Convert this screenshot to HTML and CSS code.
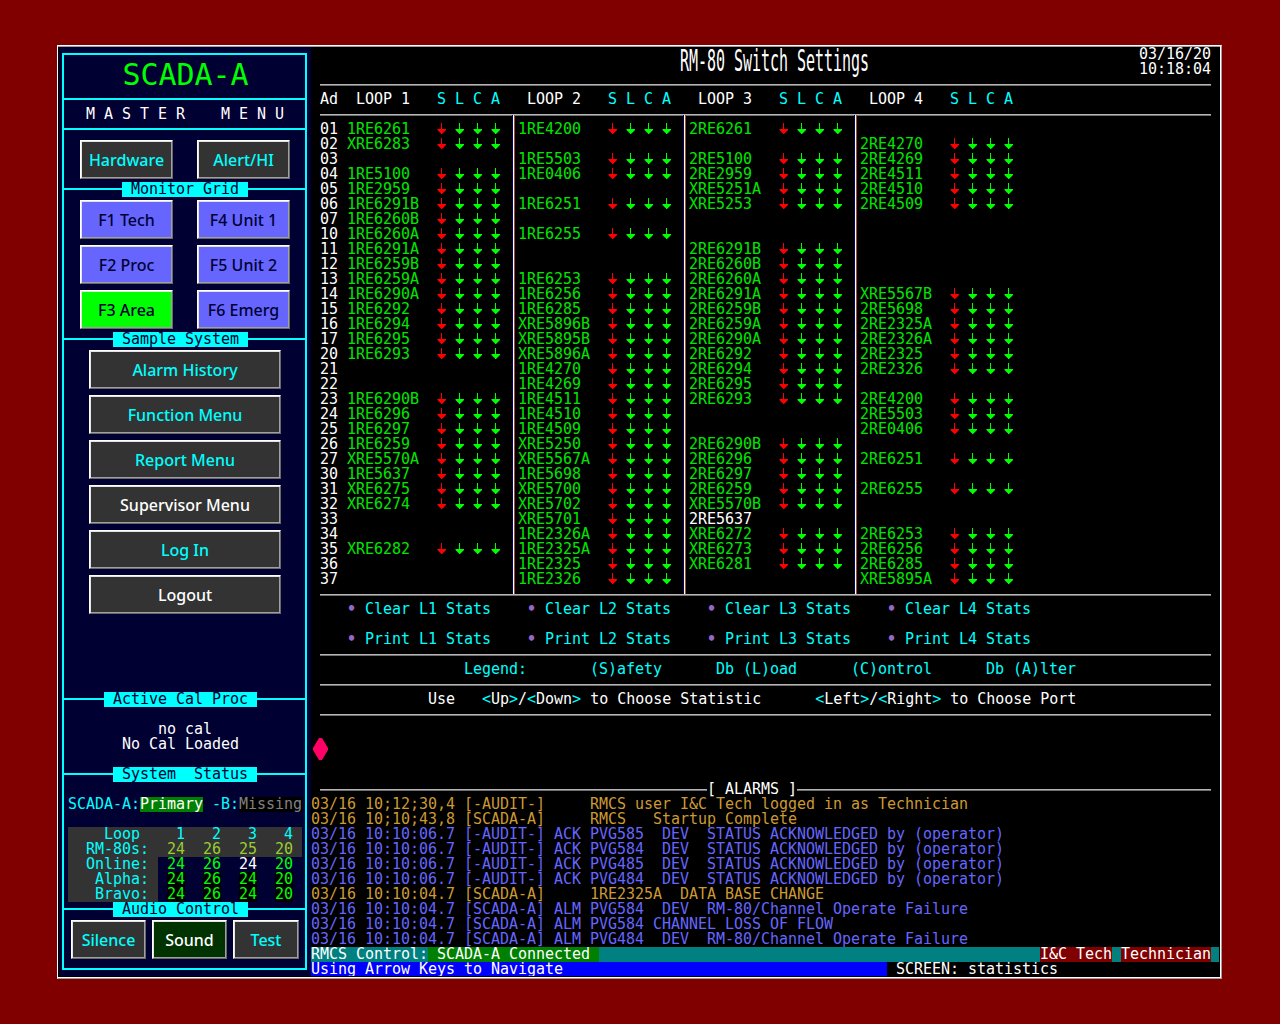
FILE: index.html
```
<!DOCTYPE html>
<html lang="en">
<head>
  <meta charset="UTF-8">
  <title>RM-80 Switch Settings</title>
  <link rel="stylesheet" href="styles.css">
</head>
<body>
  <div class="window">
    <div class="sidebar">
      <div class="frame">
        <div class="brand">SCADA-A</div>
        <div class="menu-title">M A S T E R    M E N U</div>

        <div class="grid top-grid">
          <button>Hardware</button>
          <button>Alert/HI</button>
        </div>

        <div class="section"><span> Monitor Grid </span></div>
        <div class="grid monitor-grid">
          <button class="blue">F1 Tech</button>
          <button class="blue">F4 Unit 1</button>
          <button class="blue">F2 Proc</button>
          <button class="blue">F5 Unit 2</button>
          <button class="green">F3 Area</button>
          <button class="blue">F6 Emerg</button>
        </div>

        <div class="section sample"><span> Sample System </span></div>
        <div class="stack">
          <button>Alarm History</button>
          <button>Function Menu</button>
          <button>Report Menu</button>
          <button class="light">Supervisor Menu</button>
          <button>Log In</button>
          <button class="light">Logout</button>
        </div>

        <div class="section wide"><span> Active Cal Proc </span></div>
        <pre class="cal">           no cal
       No Cal Loaded</pre>

        <div class="section system"><span> System  Status </span></div>
        <pre class="peers"><span>SCADA-A:</span><span class="primary">Primary</span><span> -B:</span><span class="missing">Missing</span></pre>
        <pre class="stats" id="stats"></pre>

        <div class="section sample"><span> Audio Control </span></div>
        <div class="audio">
          <button>Silence</button>
          <button class="sound">Sound</button>
          <button>Test</button>
        </div>
      </div>
    </div>

    <div class="main">
      <div class="header">
        <h1>RM-80 Switch Settings</h1>
        <pre class="clock">03/16/20
10:18:04</pre>
      </div>
      <div class="rule"></div>
      <pre class="heads" id="heads"></pre>
      <div class="rule"></div>
      <div class="table" id="table"></div>
      <div class="rule"></div>
      <div class="actions" id="actions"></div>
      <div class="rule"></div>
      <pre class="cyan">                 Legend:       (S)afety      Db (L)oad      (C)ontrol      Db (A)lter</pre>
      <div class="rule"></div>
      <pre>             Use   <i>&lt;</i>Up<i>&gt;</i>/<i>&lt;</i>Down<i>&gt;</i> to Choose Statistic      <i>&lt;</i>Left<i>&gt;</i>/<i>&lt;</i>Right<i>&gt;</i> to Choose Port</pre>
      <div class="rule"></div>
      <div class="prompt">
        <svg width="15" height="22" viewBox="0 0 15 22"><path d="M6 0h3l6 10v2l-6 10h-3l-6-10v-2z" fill="#ff0066"/></svg>
      </div>
      <div class="rule alarms-rule"><span>[ ALARMS ]</span></div>
      <pre class="alarms" id="alarms"></pre>
      <div class="status">
        <pre>RMCS Control:</pre><pre class="connected"> SCADA-A Connected </pre>
        <pre class="user">I&amp;C Tech</pre><pre class="role">Technician</pre>
      </div>
      <div class="hint">
        <pre class="hint-text">Using Arrow Keys to Navigate</pre><pre> SCREEN: statistics</pre>
      </div>
    </div>
  </div>

  <script>
    // addresses are octal, 01 to 37
    const loops = [
      ["1RE6261", "XRE6283", "", "1RE5100", "1RE2959", "1RE6291B", "1RE6260B", "1RE6260A",
       "1RE6291A", "1RE6259B", "1RE6259A", "1RE6290A", "1RE6292", "1RE6294", "1RE6295", "1RE6293",
       "", "", "1RE6290B", "1RE6296", "1RE6297", "1RE6259", "XRE5570A", "1RE5637",
       "XRE6275", "XRE6274", "", "", "XRE6282", "", ""],
      ["1RE4200", "", "1RE5503", "1RE0406", "", "1RE6251", "", "1RE6255",
       "", "", "1RE6253", "1RE6256", "1RE6285", "XRE5896B", "XRE5895B", "XRE5896A",
       "1RE4270", "1RE4269", "1RE4511", "1RE4510", "1RE4509", "XRE5250", "XRE5567A", "1RE5698",
       "XRE5700", "XRE5702", "XRE5701", "1RE2326A", "1RE2325A", "1RE2325", "1RE2326"],
      ["2RE6261", "", "2RE5100", "2RE2959", "XRE5251A", "XRE5253", "", "",
       "2RE6291B", "2RE6260B", "2RE6260A", "2RE6291A", "2RE6259B", "2RE6259A", "2RE6290A", "2RE6292",
       "2RE6294", "2RE6295", "2RE6293", "", "", "2RE6290B", "2RE6296", "2RE6297",
       "2RE6259", "XRE5570B", "2RE5637", "XRE6272", "XRE6273", "XRE6281", ""],
      ["", "2RE4270", "2RE4269", "2RE4511", "2RE4510", "2RE4509", "", "",
       "", "", "", "XRE5567B", "2RE5698", "2RE2325A", "2RE2326A", "2RE2325",
       "2RE2326", "", "2RE4200", "2RE5503", "2RE0406", "", "2RE6251", "",
       "2RE6255", "", "", "2RE6253", "2RE6256", "2RE6285", "XRE5895A"]
    ];
    const offline = "2RE5637";

    function arrow(cls) {
      return '<svg class="arrow ' + cls + '" viewBox="0 0 9 15"><path d="M4 1h1v6h4v1l-3 3h-.5v1h-1.5v-1h-.5l-3-3v-1h3.5z"/></svg>';
    }

    // address column
    let html = '<div class="addr">';
    for (let i = 1; i <= 31; i++) {
      let n = i.toString(8).padStart(2, "0");
      html += "<div>" + n + "</div>";
    }
    html += "</div>";

    for (const loop of loops) {
      html += '<div class="loop">';
      for (const code of loop) {
        if (!code) {
          html += '<div class="row"></div>';
        } else if (code === offline) {
          html += '<div class="row"><span class="code off">' + code + "</span></div>";
        } else {
          html += '<div class="row"><span class="code">' + code + "</span>" +
            arrow("red") + arrow("") + arrow("") + arrow("") + "</div>";
        }
      }
      html += "</div>";
    }
    document.getElementById("table").innerHTML = html;

    // loop headings
    let heads = " Ad  ";
    for (let i = 1; i <= 4; i++) {
      heads += "LOOP " + i + "   <i>S L C A</i>   ";
    }
    document.getElementById("heads").innerHTML = heads;

    // clear / print links
    let actions = "";
    for (const word of ["Clear", "Print"]) {
      for (let i = 1; i <= 4; i++) {
        actions += "<div><b>&bull;</b><span>" + word + " L" + i + " Stats</span></div>";
      }
    }
    document.getElementById("actions").innerHTML = actions;

    const alarms = [
      ["gold", "03/16 10;12;30,4 [-AUDIT-]     RMCS user I&amp;C Tech logged in as Technician"],
      ["gold", "03/16 10;10;43,8 [SCADA-A]     RMCS   Startup Complete"],
      ["", "03/16 10:10:06.7 [-AUDIT-] ACK PVG585  DEV  STATUS ACKNOWLEDGED by (operator)"],
      ["", "03/16 10:10:06.7 [-AUDIT-] ACK PVG584  DEV  STATUS ACKNOWLEDGED by (operator)"],
      ["", "03/16 10:10:06.7 [-AUDIT-] ACK PVG485  DEV  STATUS ACKNOWLEDGED by (operator)"],
      ["", "03/16 10:10:06.7 [-AUDIT-] ACK PVG484  DEV  STATUS ACKNOWLEDGED by (operator)"],
      ["gold", "03/16 10:10:04.7 [SCADA-A]     1RE2325A  DATA BASE CHANGE"],
      ["", "03/16 10:10:04.7 [SCADA-A] ALM PVG584  DEV  RM-80/Channel Operate Failure"],
      ["", "03/16 10:10:04.7 [SCADA-A] ALM PVG584 CHANNEL LOSS OF FLOW"],
      ["", "03/16 10:10:04.7 [SCADA-A] ALM PVG484  DEV  RM-80/Channel Operate Failure"]
    ];
    document.getElementById("alarms").innerHTML =
      alarms.map(a => '<div class="' + a[0] + '">' + a[1] + "</div>").join("");

    // loop statistics in the sidebar
    const stats = [
      ["head", "    Loop  ", [" 1", " 2", " 3", " 4"]],
      ["total", "  RM-80s: ", [24, 26, 25, 20]],
      ["online", "  Online: ", [24, 26, 24, 20]],
      ["chan", "   Alpha: ", [24, 26, 24, 20]],
      ["chan", "   Bravo: ", [24, 26, 24, 20]]
    ];
    document.getElementById("stats").innerHTML = stats.map(s =>
      '<div class="' + s[0] + '"><span class="label">' + s[1] + "</span>" +
      s[2].map(v => "<em>" + v + "</em>").join("") + "</div>").join("");
  </script>
</body>
</html>
```

FILE: styles.css
```
* {
  box-sizing: border-box;
}

body {
  margin: 0;
  background: #800000;
  padding: 45px 0 0 57px;
  font-family: "DejaVu Sans Mono", monospace;
  font-size: 15px;
  line-height: 15px;
  letter-spacing: -0.03px;
  color: white;
}

pre {
  margin: 0;
  font: inherit;
}

i, em, b {
  font-style: normal;
  font-weight: normal;
}

/* everything sits on a 9x15 character grid */
.window {
  width: 1165px;
  height: 934px;
  border: 1px solid white;
  border-right-color: #a0a0a0;
  border-bottom-color: #a0a0a0;
  box-shadow: inset -1px -1px white, inset 0 1px #a0a0a0;
  padding: 1px 0 0 1px;
  background: black;
  display: flex;
}

.sidebar {
  width: 252px;
  height: 929px;
  padding: 6px 4px 6px 3px;
  background: #000033;
  flex: none;
}

.frame {
  height: 917px;
  border: 2px solid cyan;
}

.brand {
  height: 45px;
  padding: 5px 0 0 2px;
  border-bottom: 2px solid cyan;
  color: lime;
  font-size: 30px;
  line-height: 30px;
  letter-spacing: -0.06px;
  text-align: center;
}

.menu-title {
  height: 30px;
  padding: 7px 0 0 22px;
  border-bottom: 2px solid cyan;
  white-space: pre;
}

button {
  height: 39px;
  padding: 0;
  border: 1px solid;
  border-color: #fff #696969 #696969 #fff;
  border-radius: 0;
  box-shadow: inset 1px 1px #e3e3e3, inset -1px -1px #a0a0a0;
  background: #333;
  color: cyan;
  font-family: "Noto Sans", sans-serif;
  font-size: 16px;
  font-weight: 500;
  white-space: nowrap;
}

.blue {
  background: #6666ff;
  color: #000033;
}

.green {
  background: lime;
  color: #000033;
}

.light, .sound {
  color: white;
}

.sound {
  background: #003300;
}

.grid {
  display: grid;
  grid-template-columns: 93px 93px;
  column-gap: 24px;
  row-gap: 6px;
  padding-left: 16px;
}

.top-grid {
  padding-top: 10px;
  height: 52px;
}

.section {
  height: 15px;
  padding-left: 58px;
  background: linear-gradient(transparent 6px, cyan 6px, cyan 8px, transparent 8px);
  white-space: pre;
  color: #000033;
}

.section span {
  display: block;
  width: max-content;
  background: cyan;
}

.sample, .system {
  padding-left: 49px;
}

.wide {
  padding-left: 40px;
}

.monitor-grid {
  height: 135px;
  padding-top: 3px;
  align-content: start;
}

.stack {
  display: flex;
  flex-direction: column;
  gap: 6px;
  width: 217px;
  height: 345px;
  padding: 3px 0 0 25px;
}

.cal {
  height: 60px;
  padding-top: 15px;
  margin-left: -5px;
}

.peers {
  display: flex;
  padding: 15px 0 15px 4px;
  color: cyan;
}

.primary {
  background: #008000;
  color: white;
}

.missing {
  background: black;
  color: #808080;
}

.stats {
  width: 238px;
  padding-left: 4px;
  color: lime;
}

.stats div {
  display: flex;
  height: 15px;
}

.stats em {
  width: 18px;
  margin: 0 9px;
}

.stats .label {
  width: 90px;
  color: cyan;
  background: #333;
}

.stats .head, .stats .total {
  background: #333;
}

.stats .head {
  color: cyan;
}

.stats .total {
  color: #9acd32;
}

.online em:nth-of-type(3) {
  color: white;
}

.chan em {
  background: black;
}

.audio {
  display: grid;
  grid-template-columns: 75px 75px 66px;
  column-gap: 6px;
  padding: 3px 0 0 7px;
}

.main {
  width: 909px;
  flex: none;
}

.main i, .cyan {
  color: cyan;
}

.header {
  height: 30px;
  display: flex;
  justify-content: space-between;
  padding: 0 9px 0 369px;
}

h1 {
  margin: 0;
  height: 15px;
  font: inherit;
  transform: scaleY(2);
  transform-origin: top;
}

.rule {
  height: 15px;
  margin: 0 9px;
  background: linear-gradient(transparent 7px, #b4b4b4 7px, #b4b4b4 8px, #707070 8px, #707070 9px, transparent 9px);
}

.table {
  display: flex;
  height: 465px;
  padding-left: 9px;
}

.addr {
  width: 27px;
}

.loop {
  width: 171px;
  position: relative;
}

/* divider runs into the rules above and below */
.loop:not(:last-child)::after {
  content: "";
  position: absolute;
  top: -7px;
  bottom: -7px;
  right: 3px;
  width: 3px;
  background: linear-gradient(to right, #000066 1px, #fff 1px, #fff 2px, #a05020 2px);
}

.row {
  display: flex;
  height: 15px;
  gap: 9px;
}

.code {
  width: 81px;
  color: #00e600;
}

.off {
  color: white;
}

.arrow {
  width: 9px;
  height: 15px;
  fill: lime;
  flex: none;
}

.red {
  fill: red;
}

.actions {
  display: grid;
  grid-template-columns: repeat(4, 180px);
  row-gap: 15px;
  padding-left: 36px;
  color: cyan;
}

.actions div {
  display: flex;
  gap: 9px;
}

.actions b {
  width: 9px;
  color: #9966cc;
  font-weight: bold;
}

.prompt {
  height: 60px;
  padding: 16px 0 0 2px;
}

.alarms-rule span {
  display: block;
  width: 90px;
  margin-left: 387px;
  background: black;
}

.alarms {
  height: 150px;
  color: #6666ff;
}

.gold {
  color: #cc9933;
}

.status {
  display: flex;
  width: 908px;
  background: #008080;
}

.connected {
  background: #008000;
}

.user, .role {
  background: #800000;
}

.user {
  margin-left: auto;
  margin-right: 9px;
}

.role {
  margin-right: 8px;
}

.hint {
  display: flex;
  height: 14px;
  overflow: hidden;
}

.hint-text {
  width: 576px;
  background: blue;
}
```
